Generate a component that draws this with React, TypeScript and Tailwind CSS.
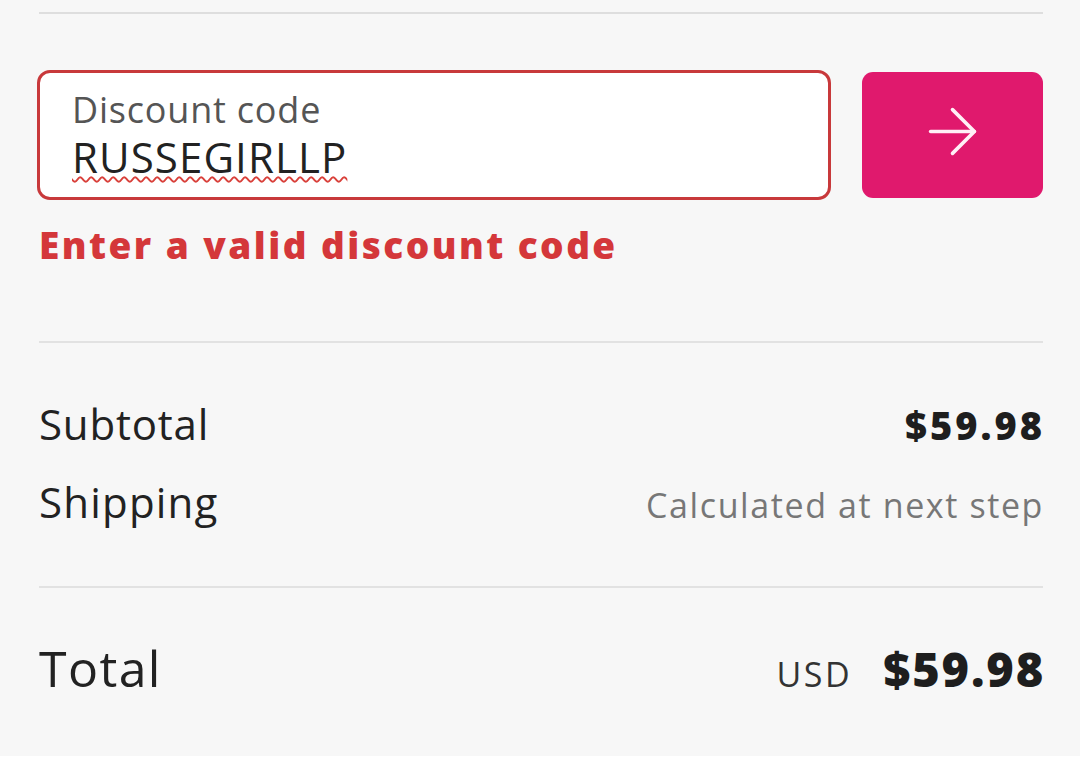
import { ArrowRight } from "lucide-react";

export default function App() {
  return (
    <div className="min-h-[767px] bg-white font-['Open_Sans',sans-serif]">
      <div className="h-[756px] bg-[#f7f7f7] pl-[39px] pr-[37px] pt-[12px]">
        <div className="h-[2px] bg-[#dedede]" />

        <div className="mt-[56px] -ml-[2px] flex items-center gap-[31px]">
          <div className="h-[130px] flex-1 rounded-[13px] border-[3px] border-[#c8393b] bg-white pl-[32px] pt-[17px]">
            <div className="text-[36px] leading-[40px] tracking-[0.8px] text-[#555555]">Discount code</div>
            <div className="mt-[3px] text-[42px] leading-[48px] tracking-[1.1px] text-[#222222]">
              <span className="underline decoration-wavy decoration-[#d9403a] decoration-2 underline-offset-[3px]">
                RUSSEGIRLLP
              </span>
            </div>
          </div>
          <button className="flex h-[126px] w-[181px] items-center justify-center rounded-[11px] bg-[#e0196d] pb-[8px]">
            <ArrowRight size={75} strokeWidth={1.15} color="#fff0f6" />
          </button>
        </div>

        <div className="mt-[25px] text-[37px] font-extrabold leading-[40px] tracking-[2.45px] text-[#d4373a]">
          Enter a valid discount code
        </div>

        <div className="mt-[76px] h-[2px] bg-[#e2e2e2]" />

        <div className="mt-[57px] flex h-[48px] items-baseline justify-between">
          <span className="text-[42px] leading-[48px] tracking-[0.8px] text-[#222222]">Subtotal</span>
          <span className="-mr-[2px] text-[38px] font-extrabold leading-none tracking-[3px] text-[#1e1e1e]">$59.98</span>
        </div>
        <div className="mt-[30px] flex h-[48px] items-baseline justify-between">
          <span className="text-[42px] leading-[48px] tracking-[1.2px] text-[#222222]">Shipping</span>
          <span className="-mr-[1px] text-[34px] leading-none tracking-[1.6px] text-[#777777]">Calculated at next step</span>
        </div>

        <div className="mt-[60px] h-[2px] bg-[#e2e2e2]" />

        <div className="mt-[52px] flex h-[56px] items-baseline justify-between">
          <span className="text-[50px] leading-[56px] tracking-[1.4px] text-[#222222]">Total</span>
          <span className="flex items-baseline gap-[31px]">
            <span className="text-[34px] leading-none tracking-[2.6px] text-[#333333]">USD</span>
            <span className="-mr-[2px] text-[47px] font-extrabold leading-none tracking-[1.8px] text-[#1e1e1e]">$59.98</span>
          </span>
        </div>
      </div>
    </div>
  );
}
